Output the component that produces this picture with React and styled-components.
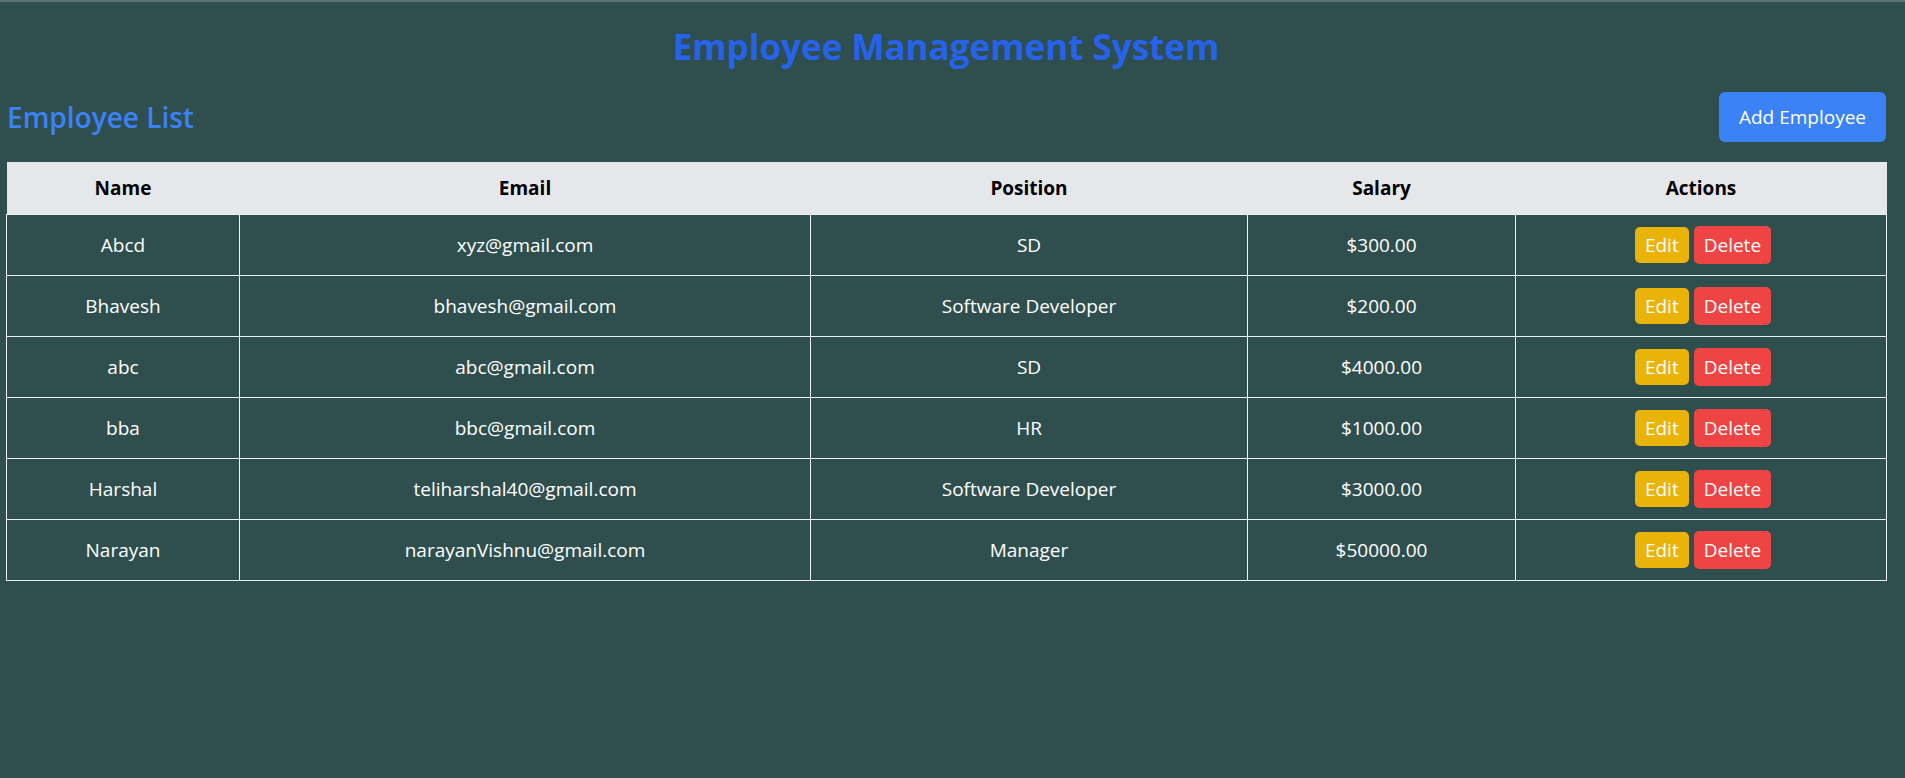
import styled, { createGlobalStyle } from "styled-components";

const GlobalStyle = createGlobalStyle`
	* {
		box-sizing: border-box;
	}
	body {
		margin: 0;
		font-family: "Open Sans", "Noto Sans", sans-serif;
		background: #2f4f4f;
	}
`;

const Page = styled.div`
	min-height: 100vh;
	background: #2f4f4f;
	border-top: 2px solid #5f7073;
	padding: 22px 19px 0 6px;
`;

const Title = styled.h1`
	margin: 0;
	text-align: center;
	color: #2563eb;
	font-size: 35px;
	line-height: 45px;
	font-weight: 700;
`;

const Toolbar = styled.div`
	display: flex;
	justify-content: space-between;
	align-items: center;
	margin-top: 23px;
	margin-bottom: 20px;
	padding-left: 1px;
`;

const SubTitle = styled.h2`
	margin: 0;
	color: #3b82f6;
	font-size: 28px;
	line-height: 38px;
	font-weight: 600;
`;

const Button = styled.button`
	border: none;
	border-radius: ${(props) => props.radius || "5px"};
	background: ${(props) => props.bg};
	color: #ffffff;
	font-family: inherit;
	font-size: ${(props) => props.size || "19px"};
	line-height: ${(props) => props.lh || "26px"};
	padding: ${(props) => props.pad || "5px 10px"};
	cursor: pointer;
`;

const Table = styled.table`
	width: 100%;
	border-collapse: collapse;
	table-layout: fixed;
	font-size: 19px;
`;

const HeadCell = styled.th`
	background: #e5e7eb;
	color: #000000;
	font-weight: 700;
	height: 52px;
	padding: 0 16px;
	text-align: center;
`;

const Row = styled.tr`
	height: 61px;
`;

const Cell = styled.td`
	border: 1px solid #eef0f2;
	color: #ffffff;
	text-align: center;
	padding: 0 16px;
`;

const Actions = styled.div`
	display: flex;
	justify-content: center;
	align-items: center;
	gap: 5px;
	padding-left: 4px;
`;

const employees = [
	{ name: "Abcd", email: "xyz@gmail.com", position: "SD", salary: "$300.00" },
	{ name: "Bhavesh", email: "bhavesh@gmail.com", position: "Software Developer", salary: "$200.00" },
	{ name: "abc", email: "abc@gmail.com", position: "SD", salary: "$4000.00" },
	{ name: "bba", email: "bbc@gmail.com", position: "HR", salary: "$1000.00" },
	{ name: "Harshal", email: "teliharshal40@gmail.com", position: "Software Developer", salary: "$3000.00" },
	{ name: "Narayan", email: "narayanVishnu@gmail.com", position: "Manager", salary: "$50000.00" },
];

const widths = [233, 571, 437, 268, 371];

const App = () => {
	return (
		<Page>
			<GlobalStyle />
			<Title>Employee Management System</Title>
			<Toolbar>
				<SubTitle>Employee List</SubTitle>
				<Button bg="#3b82f6" size="19px" lh="30px" pad="10px 20px" radius="6px">
					Add Employee
				</Button>
			</Toolbar>
			<Table>
				<colgroup>
					{widths.map((w, i) => (
						<col key={i} style={{ width: w }} />
					))}
				</colgroup>
				<thead>
					<tr>
						<HeadCell>Name</HeadCell>
						<HeadCell>Email</HeadCell>
						<HeadCell>Position</HeadCell>
						<HeadCell>Salary</HeadCell>
						<HeadCell>Actions</HeadCell>
					</tr>
				</thead>
				<tbody>
					{employees.map((emp) => (
						<Row key={emp.email}>
							<Cell>{emp.name}</Cell>
							<Cell>{emp.email}</Cell>
							<Cell>{emp.position}</Cell>
							<Cell>{emp.salary}</Cell>
							<Cell>
								<Actions>
									<Button bg="#eab308">Edit</Button>
									<Button bg="#ef4444" pad="6px 10px">Delete</Button>
								</Actions>
							</Cell>
						</Row>
					))}
				</tbody>
			</Table>
		</Page>
	);
};

export default App;
